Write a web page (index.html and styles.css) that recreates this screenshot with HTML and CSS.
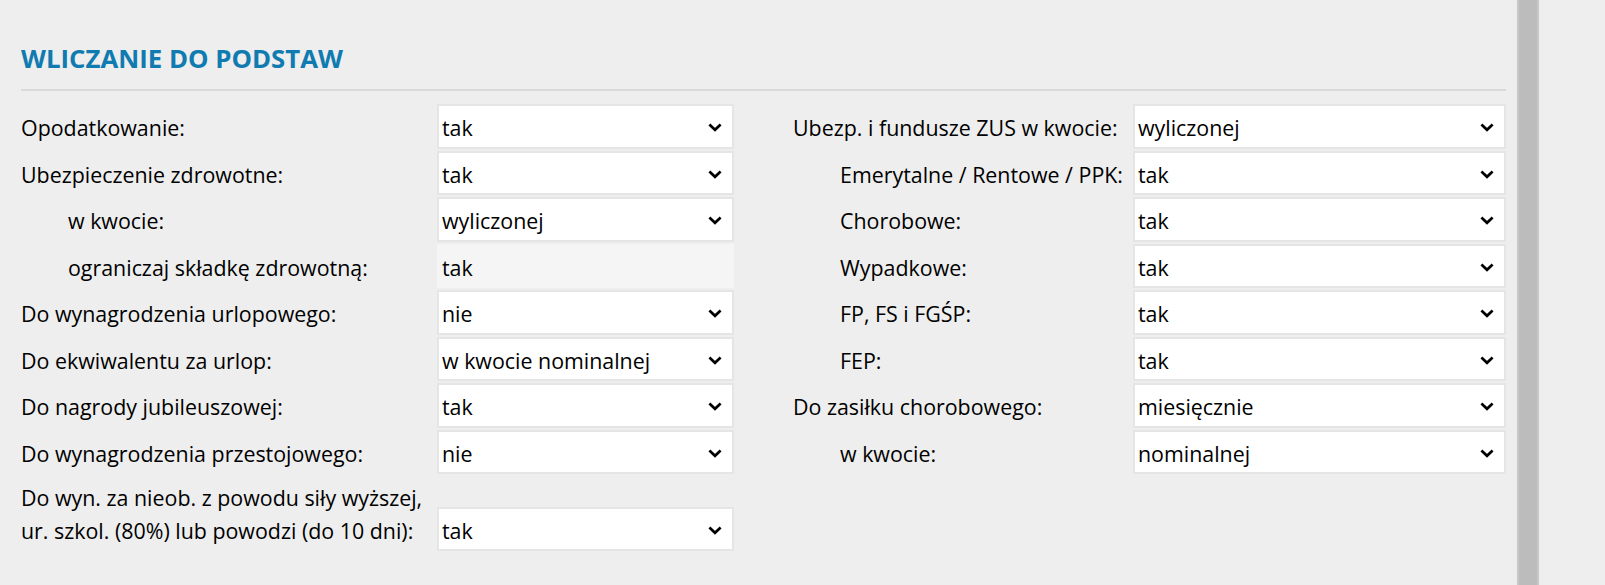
FILE: index.html
```html
<!DOCTYPE html>
<html lang="pl">
<head>
<meta charset="utf-8">
<title>Wliczanie do podstaw</title>
<link rel="stylesheet" href="styles.css">
</head>
<body>
<div class="page">
  <div class="content">
    <h2 class="title">WLICZANIE DO PODSTAW</h2>
    <div class="columns">
      <div class="col col-left">
        <div class="label">Opodatkowanie:</div>
        <div class="select"><span>tak</span><svg class="chev" viewBox="0 0 14 9" width="14" height="9"><path d="M1.4 1.6 L7 6.8 L12.6 1.6"/></svg></div>

        <div class="label">Ubezpieczenie zdrowotne:</div>
        <div class="select"><span>tak</span><svg class="chev" viewBox="0 0 14 9" width="14" height="9"><path d="M1.4 1.6 L7 6.8 L12.6 1.6"/></svg></div>

        <div class="label indent">w kwocie:</div>
        <div class="select"><span>wyliczonej</span><svg class="chev" viewBox="0 0 14 9" width="14" height="9"><path d="M1.4 1.6 L7 6.8 L12.6 1.6"/></svg></div>

        <div class="label indent">ograniczaj składkę zdrowotną:</div>
        <div class="select readonly"><span>tak</span></div>

        <div class="label">Do wynagrodzenia urlopowego:</div>
        <div class="select"><span>nie</span><svg class="chev" viewBox="0 0 14 9" width="14" height="9"><path d="M1.4 1.6 L7 6.8 L12.6 1.6"/></svg></div>

        <div class="label">Do ekwiwalentu za urlop:</div>
        <div class="select"><span>w kwocie nominalnej</span><svg class="chev" viewBox="0 0 14 9" width="14" height="9"><path d="M1.4 1.6 L7 6.8 L12.6 1.6"/></svg></div>

        <div class="label">Do nagrody jubileuszowej:</div>
        <div class="select"><span>tak</span><svg class="chev" viewBox="0 0 14 9" width="14" height="9"><path d="M1.4 1.6 L7 6.8 L12.6 1.6"/></svg></div>

        <div class="label">Do wynagrodzenia przestojowego:</div>
        <div class="select"><span>nie</span><svg class="chev" viewBox="0 0 14 9" width="14" height="9"><path d="M1.4 1.6 L7 6.8 L12.6 1.6"/></svg></div>

        <div class="label multi">Do wyn. za nieob. z powodu siły wyższej,<br>ur. szkol. (80%) lub powodzi (do 10 dni):</div>
        <div class="select bottom"><span>tak</span><svg class="chev" viewBox="0 0 14 9" width="14" height="9"><path d="M1.4 1.6 L7 6.8 L12.6 1.6"/></svg></div>
      </div>

      <div class="col col-right">
        <div class="label">Ubezp. i fundusze ZUS w kwocie:</div>
        <div class="select"><span>wyliczonej</span><svg class="chev" viewBox="0 0 14 9" width="14" height="9"><path d="M1.4 1.6 L7 6.8 L12.6 1.6"/></svg></div>

        <div class="label indent">Emerytalne / Rentowe / PPK:</div>
        <div class="select"><span>tak</span><svg class="chev" viewBox="0 0 14 9" width="14" height="9"><path d="M1.4 1.6 L7 6.8 L12.6 1.6"/></svg></div>

        <div class="label indent">Chorobowe:</div>
        <div class="select"><span>tak</span><svg class="chev" viewBox="0 0 14 9" width="14" height="9"><path d="M1.4 1.6 L7 6.8 L12.6 1.6"/></svg></div>

        <div class="label indent">Wypadkowe:</div>
        <div class="select"><span>tak</span><svg class="chev" viewBox="0 0 14 9" width="14" height="9"><path d="M1.4 1.6 L7 6.8 L12.6 1.6"/></svg></div>

        <div class="label indent">FP, FS i FGŚP:</div>
        <div class="select"><span>tak</span><svg class="chev" viewBox="0 0 14 9" width="14" height="9"><path d="M1.4 1.6 L7 6.8 L12.6 1.6"/></svg></div>

        <div class="label indent">FEP:</div>
        <div class="select"><span>tak</span><svg class="chev" viewBox="0 0 14 9" width="14" height="9"><path d="M1.4 1.6 L7 6.8 L12.6 1.6"/></svg></div>

        <div class="label">Do zasiłku chorobowego:</div>
        <div class="select"><span>miesięcznie</span><svg class="chev" viewBox="0 0 14 9" width="14" height="9"><path d="M1.4 1.6 L7 6.8 L12.6 1.6"/></svg></div>

        <div class="label indent">w kwocie:</div>
        <div class="select"><span>nominalnej</span><svg class="chev" viewBox="0 0 14 9" width="14" height="9"><path d="M1.4 1.6 L7 6.8 L12.6 1.6"/></svg></div>
      </div>
    </div>
  </div>
  <div class="scrollbar"><div class="thumb"></div></div>
  <div class="rest"></div>
</div>
</body>
</html>
```

FILE: styles.css
```css
html, body {
  margin: 0;
  padding: 0;
  background: #eeeeee;
}

body {
  font-family: "Open Sans", "Noto Sans", sans-serif;
  color: #000000;
}

.page {
  display: flex;
  height: 585px;
  overflow: hidden;
  background: #eeeeee;
}

.content {
  width: 1517px;
  box-sizing: border-box;
  padding: 43px 11px 0 21px;
}

.title {
  margin: 0;
  font-size: 25.8px;
  line-height: 30px;
  font-weight: 700;
  color: #0f7bb0;
  padding-bottom: 16px;
  border-bottom: 2px solid #d9d9d9;
}

.columns {
  display: grid;
  grid-template-columns: 713px 713px;
  column-gap: 59px;
  align-items: start;
  margin-top: 13px;
}

.col {
  display: grid;
  align-content: start;
  row-gap: 2px;
}

.col-left {
  grid-template-columns: 416px 297px;
  grid-template-rows: repeat(8, 44.5px) auto;
}

.col-right {
  grid-template-columns: 340px 373px;
  grid-template-rows: repeat(8, 44.5px);
}

.label {
  font-size: 21.4px;
  line-height: 40px;
  padding-top: 4px;
  white-space: nowrap;
}

.label.indent {
  padding-left: 47px;
}

.label.multi {
  line-height: 33px;
  padding-top: 5px;
  padding-bottom: 4px;
}

.select {
  box-sizing: border-box;
  height: 44.5px;
  display: flex;
  align-items: center;
  justify-content: space-between;
  background: #ffffff;
  border: 2px solid #e5e5e5;
  padding: 3px 10px 0 3px;
  font-size: 21.4px;
  line-height: 37px;
}

.select.readonly {
  background: #f5f5f5;
  border-color: #f5f5f5;
}

.select.bottom {
  align-self: end;
}

.chev {
  display: block;
  fill: none;
  stroke: #000000;
  stroke-width: 2.7;
}

.scrollbar {
  width: 22px;
  flex: none;
  box-sizing: border-box;
  background: #c7c7c7;
  padding: 0 2px;
}

.thumb {
  height: 100%;
  background: #bcbcbc;
}

.rest {
  flex: 1;
  background: #eeeeee;
}
```
